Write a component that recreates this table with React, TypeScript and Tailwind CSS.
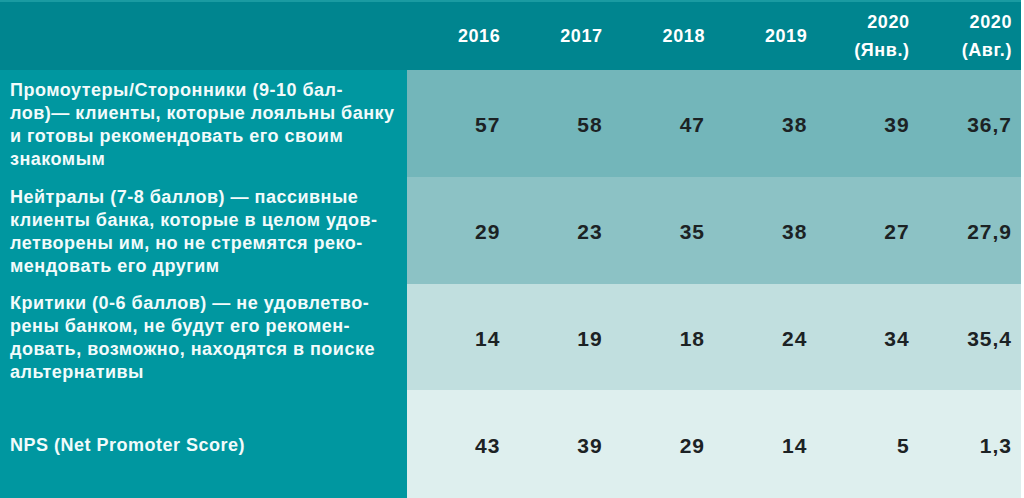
const years = [
  ["2016"],
  ["2017"],
  ["2018"],
  ["2019"],
  ["2020", "(Янв.)"],
  ["2020", "(Авг.)"],
];

const rows = [
  {
    label: "Промоутеры/Сторонники (9-10 бал-\nлов)— клиенты, которые лояльны банку\nи готовы рекомендовать его своим\nзнакомым",
    values: ["57", "58", "47", "38", "39", "36,7"],
    bg: "bg-[#73b6ba]",
    h: "h-[107px]",
  },
  {
    label: "Нейтралы (7-8 баллов) — пассивные\nклиенты банка, которые в целом удов-\nлетворены им, но не стремятся реко-\nмендовать его другим",
    values: ["29", "23", "35", "38", "27", "27,9"],
    bg: "bg-[#8cc2c5]",
    h: "h-[107px]",
  },
  {
    label: "Критики (0-6 баллов) — не удовлетво-\nрены банком, не будут его рекомен-\nдовать, возможно, находятся в поиске\nальтернативы",
    values: ["14", "19", "18", "24", "34", "35,4"],
    bg: "bg-[#c1dfdf]",
    h: "h-[106px]",
  },
  {
    label: "NPS (Net Promoter Score)",
    values: ["43", "39", "29", "14", "5", "1,3"],
    bg: "bg-[#deefee]",
    h: "h-[108px]",
  },
];

export default function App() {
  return (
    <div className="w-[1024px] h-[498px] bg-white font-['Liberation_Sans',Arial,sans-serif]">
      <div className="w-[1021px]">
        {/* Header */}
        <div className="grid grid-cols-[407px_repeat(6,1fr)] h-[70px] bg-[#00858f] border-t-2 border-[#1a9ba2]">
          <div />
          {years.map((y, i) => (
            <div
              key={i}
              className="flex flex-col items-end justify-center pr-[9px] text-white text-[18px] font-bold leading-[28px] tracking-[0.6px]"
            >
              {y.map((t) => (
                <span key={t}>{t}</span>
              ))}
            </div>
          ))}
        </div>

        {/* Body */}
        {rows.map((r, i) => (
          <div key={i} className={`grid grid-cols-[407px_repeat(6,1fr)] ${r.h}`}>
            <div className="bg-[#0097a0] flex items-center pl-[10px] pr-2 pt-[2px] text-[#f2fbfb] text-[18px] font-bold leading-[23px] whitespace-pre-line tracking-[0.5px]">
              {r.label}
            </div>
            {r.values.map((v, j) => (
              <div
                key={j}
                className={`${r.bg} flex items-center justify-end pt-[3px] pr-[9px] text-[#1c2224] text-[21px] font-bold tracking-[1px]`}
              >
                {v}
              </div>
            ))}
          </div>
        ))}
      </div>
    </div>
  );
}
